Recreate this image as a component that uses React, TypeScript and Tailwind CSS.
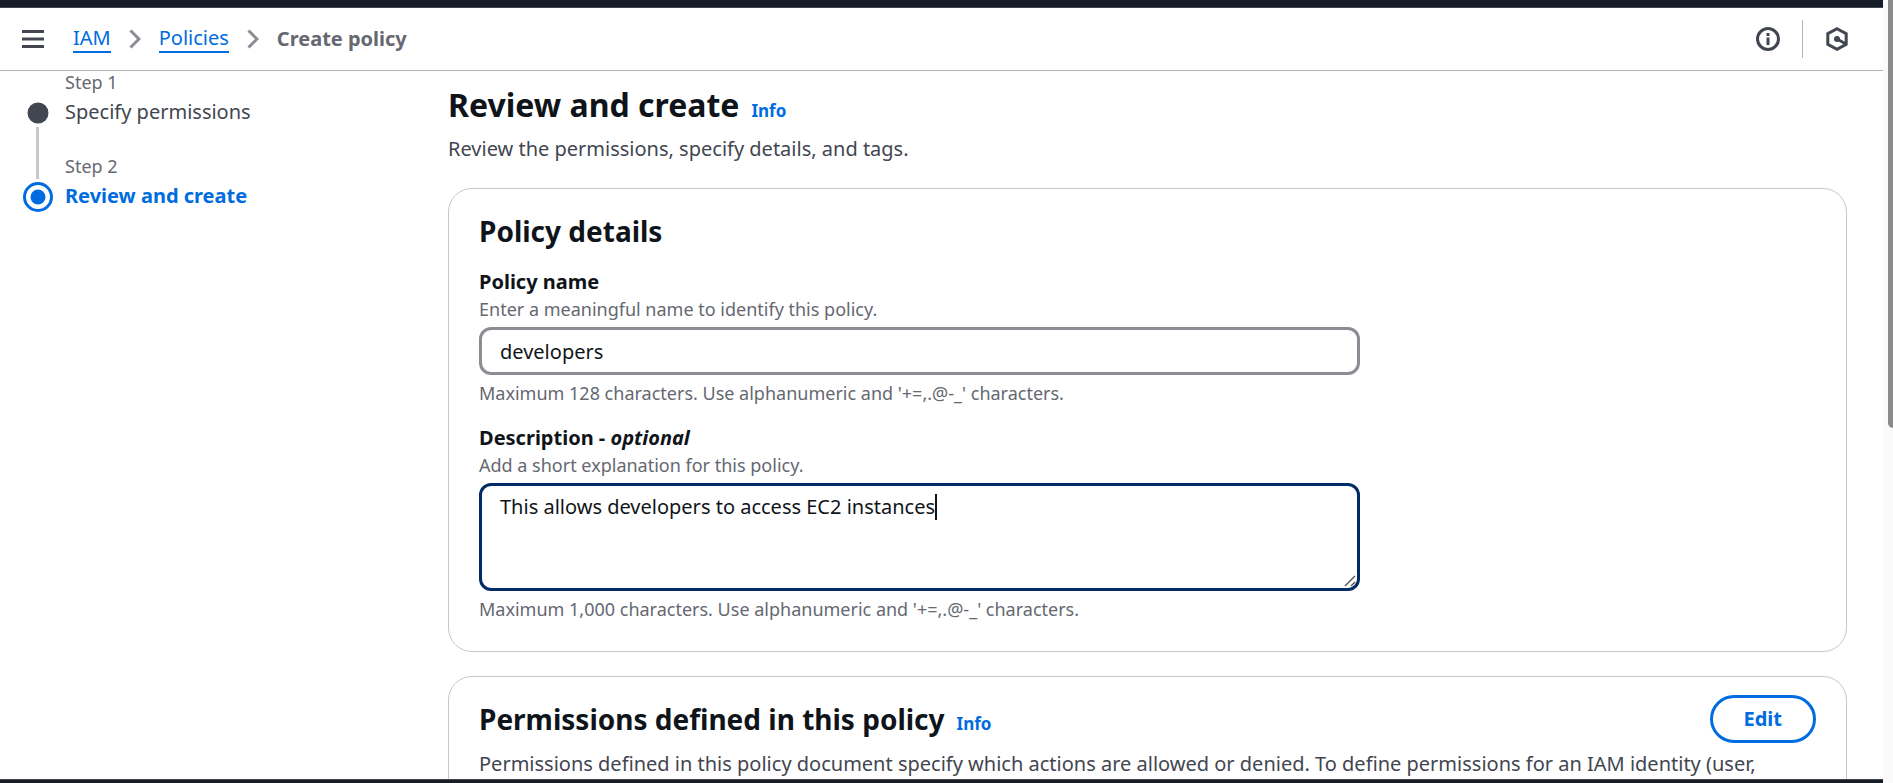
import type { ReactNode } from 'react';

function Chevron() {
  return (
    <svg width="12" height="20" viewBox="0 0 12 20" fill="none" stroke="#8c8c94" strokeWidth="3" aria-hidden="true">
      <path d="M1.5 1.5 10 10 1.5 18.5" />
    </svg>
  );
}

function InfoLink() {
  return (
    <a href="#info" className="text-[17px] font-bold leading-6 text-[#006ce0]">
      Info
    </a>
  );
}

function Card({ children }: { children: ReactNode }) {
  return <section className="rounded-3xl border border-[#c6c6cd] bg-white px-[30px] pt-[18px]">{children}</section>;
}

function Header() {
  return (
    <header className="flex h-[63px] shrink-0 items-center justify-between border-b border-[#b4b4bb] bg-white pl-[22px] pr-[34px]">
      <div className="flex items-center gap-[29px]">
        <button type="button" aria-label="Open navigation" className="block">
          <svg width="22" height="18" viewBox="0 0 22 18" fill="none" stroke="#424650" strokeWidth="3" aria-hidden="true">
            <path d="M0 1.5h22M0 9h22M0 16.5h22" />
          </svg>
        </button>
        <nav aria-label="Breadcrumbs">
          <ol className="flex items-center gap-[18px] text-xl leading-[26px]">
            <li>
              <a href="#iam" className="block border-b-2 border-[#006ce0] text-[#006ce0]">IAM</a>
            </li>
            <li><Chevron /></li>
            <li>
              <a href="#policies" className="block border-b-2 border-[#006ce0] text-[#006ce0]">Policies</a>
            </li>
            <li><Chevron /></li>
            <li className="font-bold text-[#656871]">Create policy</li>
          </ol>
        </nav>
      </div>
      <div className="flex items-center gap-[22px]">
        <button type="button" aria-label="Help" className="block">
          <svg width="24" height="24" viewBox="0 0 24 24" aria-hidden="true">
            <circle cx="12" cy="12" r="10.5" fill="none" stroke="#424650" strokeWidth="3" />
            <path d="M10.5 6h3v3h-3zM10.5 10.5h3V18h-3z" fill="#424650" />
          </svg>
        </button>
        <div className="h-[38px] w-px bg-[#b4b4bb]" />
        <button type="button" aria-label="Assistant" className="block">
          <svg width="24" height="24" viewBox="0 0 24 24" fill="none" stroke="#424650" strokeWidth="3" aria-hidden="true">
            <path d="M12 1.7 21.2 6.7V17.3L12 22.3 2.8 17.3V6.7z" />
            <circle cx="12" cy="12" r="3" fill="#424650" stroke="none" />
            <path d="M12 12 21 17" />
          </svg>
        </button>
      </div>
    </header>
  );
}

function Steps() {
  return (
    <nav aria-label="Steps" className="w-[448px] shrink-0 pl-[22px]">
      <ol>
        <li className="flex gap-3">
          <div className="flex w-[31px] flex-col items-center pt-[31px]">
            <svg width="22" height="22" viewBox="0 0 22 22" aria-hidden="true">
              <circle cx="11" cy="11" r="10.5" fill="#424650" />
            </svg>
            <div className="mb-[-24px] mt-[3px] w-[3px] grow bg-[#c6c6cd]" />
          </div>
          <div className="h-[84px]">
            <div className="text-lg leading-[22px] text-[#656871]">Step 1</div>
            <a href="#permissions" className="block pt-1 text-xl leading-[30px] text-[#424650]">Specify permissions</a>
          </div>
        </li>
        <li className="flex gap-3">
          <div className="flex w-[31px] flex-col items-center pt-[27px]">
            <svg width="30" height="30" viewBox="0 0 30 30" aria-hidden="true">
              <circle cx="15" cy="15" r="13.5" fill="none" stroke="#006ce0" strokeWidth="3" />
              <circle cx="15" cy="15" r="7.5" fill="#006ce0" />
            </svg>
          </div>
          <div>
            <div className="text-lg leading-[22px] text-[#656871]">Step 2</div>
            <a href="#review" aria-current="step" className="block pt-1 text-xl font-bold leading-[30px] text-[#006ce0]">
              Review and create
            </a>
          </div>
        </li>
      </ol>
    </nav>
  );
}

function PolicyDetails() {
  return (
    <Card>
      <h2 className="text-[28px] font-bold leading-[48px]">Policy details</h2>
      <div className="max-w-[881px] pb-[30px] pt-3">
        <label htmlFor="policy-name" className="block text-xl font-bold leading-[30px]">Policy name</label>
        <p id="name-hint" className="pb-[6px] text-lg leading-6 text-[#656871]">
          Enter a meaningful name to identify this policy.
        </p>
        <input
          id="policy-name"
          type="text"
          defaultValue="developers"
          aria-describedby="name-hint"
          className="block h-12 w-full rounded-xl border-[3px] border-[#8c8c94] px-[18px] text-xl outline-none"
        />
        <p className="pt-[6px] text-lg leading-6 text-[#656871]">
          Maximum 128 characters. Use alphanumeric and '+=,.@-_' characters.
        </p>
        <label htmlFor="description" className="block pt-[18px] text-xl font-bold leading-[30px]">
          Description - <i>optional</i>
        </label>
        <p id="description-hint" className="pb-[6px] text-lg leading-6 text-[#656871]">
          Add a short explanation for this policy.
        </p>
        <div className="relative">
          <textarea
            id="description"
            defaultValue="This allows developers to access EC2 instances"
            aria-describedby="description-hint"
            className="block h-[108px] w-full resize-none rounded-xl border-[3px] border-[#002b66] px-[18px] py-[6px] text-xl leading-[30px] outline-none"
          />
          <span className="absolute left-[456px] top-[11px] h-[26px] w-[2px] bg-[#0f141a]" />
          <svg
            className="pointer-events-none absolute bottom-1 right-1"
            width="12"
            height="12"
            viewBox="0 0 12 12"
            stroke="#5f5f5f"
            strokeWidth="1.5"
            aria-hidden="true"
          >
            <path d="M1 11 11 1M7 11l4-4" />
          </svg>
        </div>
        <p className="pt-[6px] text-lg leading-6 text-[#656871]">
          Maximum 1,000 characters. Use alphanumeric and '+=,.@-_' characters.
        </p>
      </div>
    </Card>
  );
}

function PermissionsCard() {
  return (
    <Card>
      <div className="flex items-center justify-between">
        <h2 className="flex items-baseline gap-3 text-[28px] font-bold leading-[48px]">
          Permissions defined in this policy <InfoLink />
        </h2>
        <button type="button" className="h-12 rounded-full border-[3px] border-[#006ce0] px-[31px] text-xl font-bold text-[#006ce0]">
          Edit
        </button>
      </div>
      <p className="pt-[6px] text-xl leading-[30px] text-[#424650]">
        Permissions defined in this policy document specify which actions are allowed or denied. To define permissions for an IAM identity (user,
      </p>
    </Card>
  );
}

export default function App() {
  return (
    <div className="flex h-screen overflow-hidden bg-white font-['Noto_Sans',sans-serif] text-[#0f141a]">
      <div className="flex min-w-0 grow flex-col">
        <div className="h-2 shrink-0 border-b border-[#424650] bg-[#161d26]" />
        <Header />
        <div className="flex min-h-0 grow overflow-hidden">
          <Steps />
          <main className="min-w-0 grow pr-9 pt-[11px]">
            <h1 className="flex items-baseline gap-3 text-[32px] font-bold leading-[46px]">
              Review and create <InfoLink />
            </h1>
            <p className="pb-6 pt-[6px] text-xl leading-[30px] text-[#424650]">
              Review the permissions, specify details, and tags.
            </p>
            <div className="flex flex-col gap-6 pb-10">
              <PolicyDetails />
              <div className="h-[220px] [&>section]:h-full">
                <PermissionsCard />
              </div>
            </div>
          </main>
        </div>
        <div className="h-1 shrink-0 border-t border-[#424650] bg-[#161d26]" />
      </div>
      <div className="w-[10px] shrink-0 bg-[#fafafa] pl-[5px]">
        <div className="h-[428px] rounded-bl-[5px] bg-[#8b8b8b]" />
      </div>
    </div>
  );
}
